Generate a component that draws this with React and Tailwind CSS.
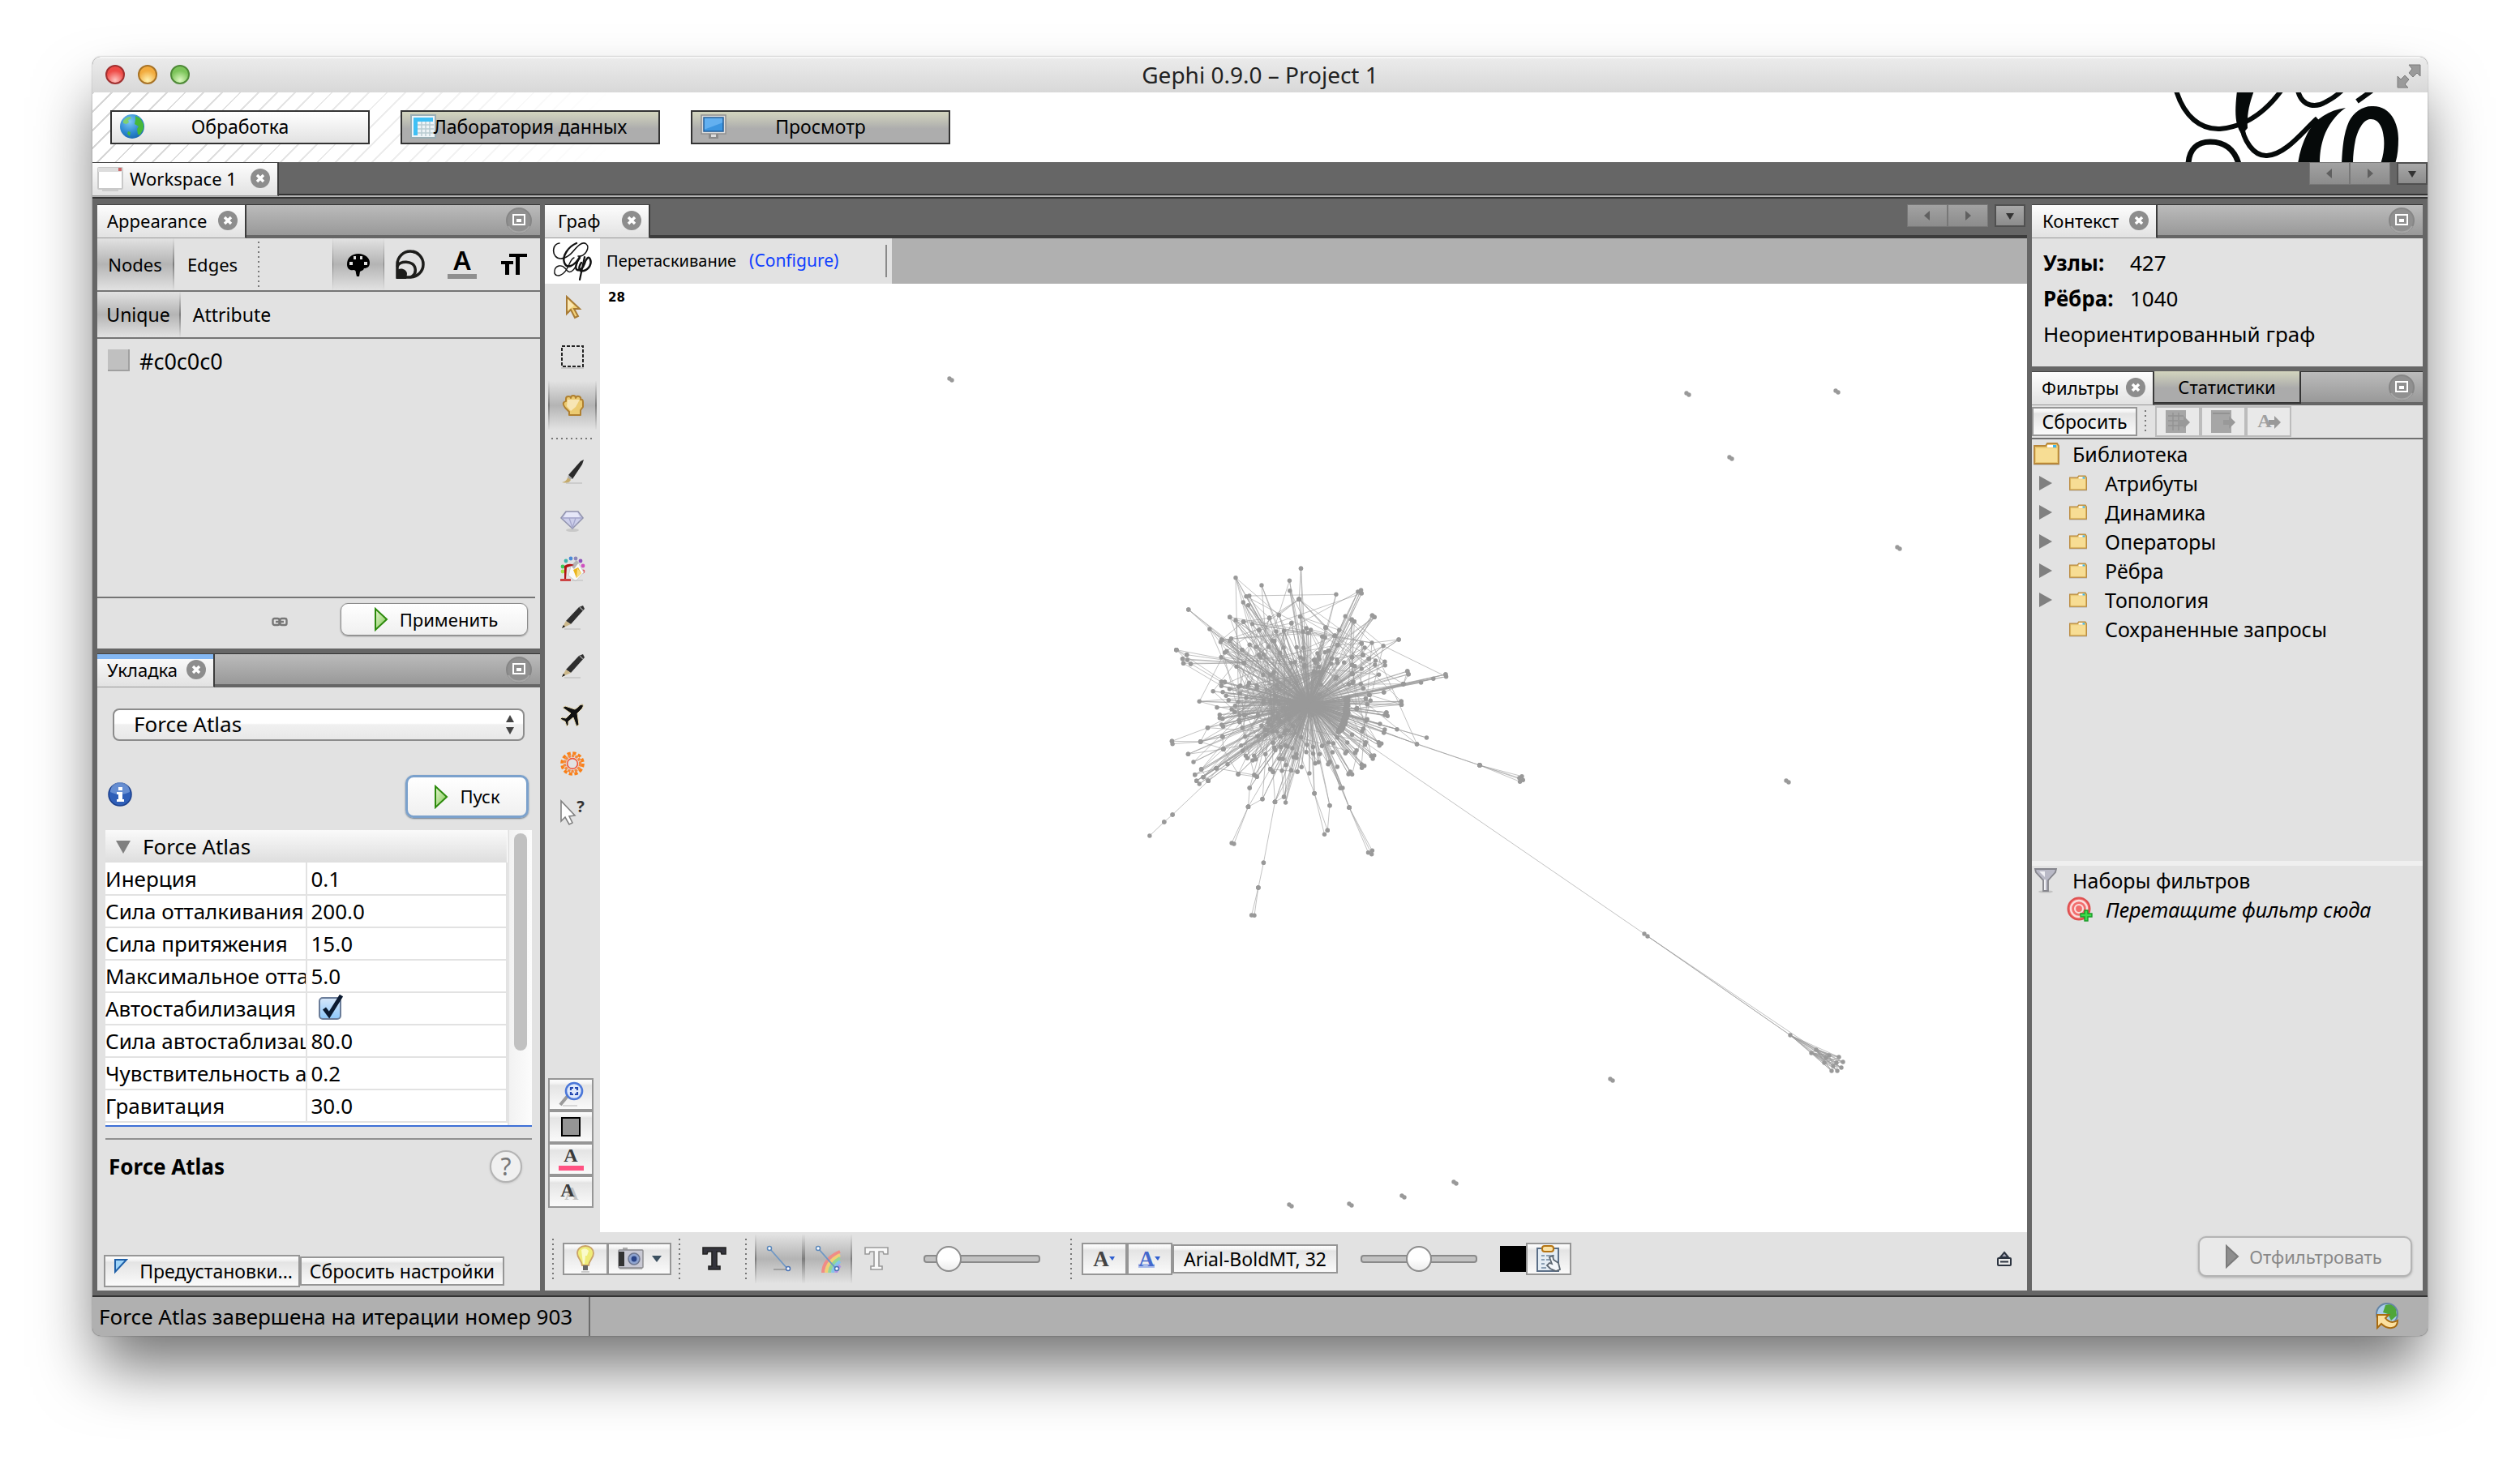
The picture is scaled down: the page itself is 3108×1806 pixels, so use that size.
import React from "react";

/* ---------- graph data ---------- */

const HUB = [680, 625];
const SUB_HUBS = [
  [560, 600],
  [555, 690],
  [635, 735],
  [545, 560],
  [735, 500],
  [615, 545],
];

// Outlying nodes, each wired to a hub
const OUTER = [
  [418, 158], [511, 186], [611, 169], [612, 206], [652, 124], [645, 238], [778, 220], [856, 210], [867, 204],
  [869, 216], [456, 227], [467, 225], [445, 249], [463, 260], [249, 276], [325, 348], [368, 388], [364, 396],
  [397, 304], [418, 315], [446, 321], [478, 329], [539, 307], [573, 296], [649, 302], [618, 326], [563, 357],
  [591, 355], [502, 352], [671, 345], [687, 351], [659, 357], [677, 363], [740, 343], [811, 301], [834, 313],
  [843, 320], [907, 298], [915, 304], [1002, 387], [947, 410], [906, 399], [869, 401], [880, 417], [773, 373],
  [728, 376], [738, 379], [789, 352], [783, 407], [402, 383], [397, 392], [468, 406], [491, 414], [441, 425],
  [386, 430], [379, 435], [366, 452], [421, 487], [448, 473], [551, 391], [557, 392], [590, 417], [501, 443],
  [536, 414], [711, 438], [750, 428], [762, 457], [835, 452], [874, 444], [895, 458], [919, 465], [952, 469],
  [953, 482], [917, 480], [869, 495], [835, 481], [845, 485], [931, 517], [1033, 504], [1037, 515], [1019, 551],
  [1082, 546], [1126, 532], [1170, 516], [1172, 524], [949, 582], [866, 551], [875, 568], [835, 514], [823, 553],
  [1011, 616], [1012, 628], [901, 613], [884, 605], [889, 626], [897, 592], [852, 642], [958, 657], [962, 670],
  [952, 666], [889, 682], [886, 687], [935, 699], [996, 719], [1102, 750], [949, 731], [952, 720], [875, 717],
  [871, 726], [1067, 774], [930, 767], [940, 772], [933, 779], [835, 739], [884, 767], [881, 776], [818, 768],
  [851, 797], [846, 806], [816, 801], [811, 808], [914, 816], [904, 818], [909, 828], [765, 804], [869, 849],
  [879, 854], [870, 862], [782, 858], [828, 876], [822, 885], [835, 886], [755, 840], [749, 848], [715, 841],
  [703, 845], [719, 811], [682, 882], [654, 859], [639, 876], [617, 871], [584, 872], [552, 877], [598, 851],
  [574, 828], [587, 829], [625, 822], [636, 825], [542, 866], [525, 811], [484, 817], [490, 830], [479, 834],
  [454, 817], [460, 826], [443, 799], [438, 779], [494, 895], [485, 888], [427, 885], [389, 848], [349, 863],
  [468, 936], [514, 977], [591, 969], [597, 990], [559, 988], [700, 956], [755, 1001], [801, 936], [793, 937],
  [825, 1009], [295, 867], [272, 887], [278, 910], [288, 921], [320, 910], [302, 896], [267, 840], [248, 811],
  [292, 765], [374, 792], [371, 746], [318, 713], [368, 702], [373, 709], [430, 685], [432, 692], [442, 713],
  [361, 665], [361, 677], [371, 680], [404, 645], [414, 655], [351, 638], [416, 632], [288, 616], [393, 611],
  [384, 595], [337, 578], [372, 581], [396, 570], [367, 544], [379, 544], [367, 558], [435, 557], [427, 617],
  [462, 557], [494, 557], [452, 746], [456, 603], [466, 547], [497, 745], [524, 740], [551, 769], [580, 785],
  [604, 783], [621, 789], [671, 803], [674, 776], [751, 768], [768, 771], [727, 781], [782, 749],
];

// Chains and fans that leave the main body: [from, to]
const LINKS = [
  [[320, 910], [192, 1035]], [[192, 1035], [162, 1062]], [[162, 1062], [110, 1113]],
  [[559, 988], [518, 1213]], [[518, 1213], [499, 1305]], [[499, 1305], [475, 1407]], [[499, 1305], [485, 1408]],
  [[463, 1006], [404, 1140]], [[463, 1006], [412, 1143]], [[514, 977], [463, 1006]], [[468, 936], [463, 1006]],
  [[542, 866], [463, 1006]],
  [[700, 956], [736, 1108]], [[700, 956], [747, 1093]], [[755, 1001], [747, 1093]],
  [[825, 1009], [893, 1175]], [[825, 1009], [907, 1168]], [[825, 1009], [905, 1181]], [[755, 840], [825, 1009]],
  [[1067, 774], [1292, 852]], [[949, 731], [1292, 852]], [[1292, 852], [1434, 899]], [[1292, 852], [1443, 893]],
  [[1292, 852], [1447, 907]], [[1292, 852], [1436, 913]],
  [[645, 238], [539, 307]], [[645, 238], [740, 343]], [[645, 238], [573, 296]], [[645, 238], [773, 373]],
  [[652, 124], [645, 238]], [[539, 307], [446, 321]], [[446, 321], [368, 388]], [[502, 352], [618, 326]],
  [[249, 276], [368, 388]], [[441, 425], [397, 304]], [[448, 473], [502, 352]],
  [[206, 425], [243, 443]], [[206, 425], [448, 473]], [[243, 443], [448, 473]], [[228, 458], [448, 473]],
  [[231, 475], [448, 473]], [[257, 477], [448, 473]], [[206, 425], [379, 544]], [[228, 458], [367, 544]],
  [[231, 475], [367, 558]], [[245, 462], [448, 473]], [[206, 425], [257, 477]],
  [[190, 763], [318, 713]], [[190, 763], [292, 765]], [[192, 773], [292, 765]], [[292, 765], [374, 792]],
  [[292, 765], [318, 713]], [[292, 765], [371, 746]], [[374, 792], [248, 811]], [[374, 792], [371, 746]],
  [[374, 792], [427, 885]], [[427, 885], [494, 895]], [[349, 863], [485, 888]], [[302, 896], [320, 910]],
  [[272, 887], [349, 863]], [[278, 910], [349, 863]], [[295, 867], [320, 910]], [[295, 867], [374, 792]],
  [[542, 866], [639, 876]], [[559, 988], [591, 969]], [[559, 988], [552, 877]], [[559, 988], [617, 871]],
  [[869, 401], [783, 407]], [[835, 452], [907, 298]], [[834, 313], [835, 514]], [[843, 320], [835, 514]],
  [[750, 428], [835, 452]], [[762, 457], [874, 444]], [[783, 407], [915, 304]], [[852, 642], [835, 481]],
  [[852, 642], [884, 605]], [[852, 642], [1011, 616]], [[852, 642], [1012, 628]], [[852, 642], [958, 657]],
  [[897, 592], [1012, 628]], [[1019, 551], [1033, 504]], [[1019, 551], [1037, 515]], [[1019, 551], [1170, 516]],
  [[1019, 551], [949, 582]], [[823, 553], [1019, 551]], [[874, 444], [1002, 387]], [[874, 444], [869, 401]],
  [[740, 343], [773, 373]], [[895, 458], [874, 444]],
];

const FAR_NODES = [
  [1288, 802], [1292, 805], [1468, 927], [1500, 945], [1494, 949], [1516, 952], [1528, 954], [1533, 960],
  [1525, 961], [1510, 961], [1521, 965], [1531, 967], [1519, 971], [1526, 971], [1512, 955],
];
const LONE_NODES = [
  [432, 118], [1341, 136], [1525, 133], [1394, 215], [1601, 326], [1464, 614], [1247, 982],
  [851, 1137], [925, 1136], [990, 1126], [1054, 1109],
];

function makeGraph() {
  let seed = 20151;
  const rnd = () => {
    seed = (seed * 16807) % 2147483647;
    return seed / 2147483647;
  };
  const at = ([x, y]) => [640 + x * 0.3444, 310 + y / 3];
  const nodes = OUTER.map((p) => p);
  const edges = [];
  OUTER.forEach((p) => {
    edges.push([p, HUB], [p, [HUB[0] + rnd() * 40 - 20, HUB[1] + rnd() * 30 - 15]]);
    if (p[0] < 620 && rnd() < 0.6) edges.push([p, SUB_HUBS[Math.floor(rnd() * SUB_HUBS.length)]]);
    if (rnd() < 0.3) edges.push([p, OUTER[Math.floor(rnd() * 60)]]);
  });
  for (let i = 0; i < 110; i++) {
    const a = rnd() * Math.PI * 2;
    const r = 60 + 150 * rnd();
    const p = [650 + Math.cos(a) * r * 1.1, 615 + Math.sin(a) * r];
    if (p[0] > 720 && p[1] > 560) continue;
    nodes.push(p);
    edges.push([p, HUB]);
    if (rnd() < 0.6) edges.push([p, SUB_HUBS[Math.floor(rnd() * 6)]]);
    if (rnd() < 0.3) edges.push([p, nodes[Math.floor(rnd() * nodes.length)]]);
  }
  for (let i = 0; i < 80; i++) {
    const t = rnd();
    const p = [824 - Math.pow(t, 3) * 30 - rnd() * 14, 602 + t * 128];
    nodes.push(p);
    edges.push([p, HUB]);
  }
  for (let i = 0; i < 130; i++) {
    const a = rnd() * Math.PI * 2;
    const r = 70 * rnd();
    edges.push([[640 + Math.cos(a) * r * 1.7, 630 + Math.sin(a) * r], [HUB[0] - 10, HUB[1] + rnd() * 30 - 15]]);
  }
  SUB_HUBS.forEach((h, i) => {
    for (let k = 0; k < 10; k++) edges.push([[h[0] + rnd() * 20 - 10, h[1] + rnd() * 20 - 10], HUB]);
    edges.push([h, SUB_HUBS[(i + 1) % SUB_HUBS.length]]);
  });
  LINKS.forEach(([a, b]) => {
    nodes.push(a, b);
    edges.push([a, b]);
  });
  const n = nodes.map(at).concat(FAR_NODES);
  LONE_NODES.forEach(([x, y]) => n.push([x - 1, y - 1], [x + 2, y + 1]));
  const e = edges.map(([a, b]) => [at(a), at(b)]);
  e.push([at(HUB), FAR_NODES[0]], [FAR_NODES[0], FAR_NODES[2]], [FAR_NODES[1], FAR_NODES[3]], [FAR_NODES[1], FAR_NODES[2]]);
  for (let i = 3; i < FAR_NODES.length; i++) {
    e.push([FAR_NODES[2], FAR_NODES[i]]);
    e.push([FAR_NODES[3], FAR_NODES[i]]);
    e.push([FAR_NODES[4], FAR_NODES[i]]);
    e.push([FAR_NODES[i], FAR_NODES[3 + ((i * 5) % 12)]]);
  }
  return { n, e };
}
const GRAPH = makeGraph();
const f1 = (v) => v.toFixed(1);
const EDGE_PATHS = GRAPH.e.map(([a, b]) => `M${f1(a[0])} ${f1(a[1])}L${f1(b[0])} ${f1(b[1])}`);

function GraphDrawing() {
  return (
    <svg className="block h-full w-full" viewBox="0 0 1760 1170" preserveAspectRatio="xMidYMid meet" aria-label="Граф">
      <g stroke="#999" strokeOpacity="0.6" strokeWidth="1" fill="none">
        {EDGE_PATHS.map((d, i) => (
          <path key={i} d={d} />
        ))}
      </g>
      <g fill="#999">
        {GRAPH.n.map(([x, y], i) => (
          <circle key={i} cx={f1(x)} cy={f1(y)} r="2.7" />
        ))}
      </g>
    </svg>
  );
}

/* ---------- icons ---------- */

const Svg = ({ s = 32, w, h, vb, children, className = "" }) => (
  <svg width={w || s} height={h || s} viewBox={vb || `0 0 ${w || s} ${h || s}`} className={`block shrink-0 ${className}`} aria-hidden="true">
    {children}
  </svg>
);

const CloseIcon = () => (
  <Svg s={24}>
    <circle cx="12" cy="12" r="12" fill="#8d8d8d" />
    <path d="M8 8l8 8M16 8l-8 8" stroke="#fff" strokeWidth="3.4" />
  </Svg>
);
const RestoreIcon = () => (
  <Svg s={34}>
    <circle cx="17" cy="17" r="15" fill="#909090" stroke="#868686" strokeWidth="2" />
    <path d="M4 24a15 15 0 0 0 26 0" stroke="#a6a6a6" strokeWidth="2" fill="none" />
    <rect x="10" y="10" width="14" height="12" fill="none" stroke="#fff" strokeWidth="2" />
    <rect x="14" y="15" width="6" height="4" fill="#fff" />
  </Svg>
);
const Globe = () => (
  <Svg s={32}>
    <defs>
      <radialGradient id="globe" cx=".4" cy=".3" r=".8">
        <stop offset="0" stopColor="#7cc8f5" />
        <stop offset=".6" stopColor="#2b86cf" />
        <stop offset="1" stopColor="#1461a8" />
      </radialGradient>
    </defs>
    <circle cx="16" cy="16" r="15" fill="url(#globe)" />
    <path d="M5 9Q9 4 14 4l1 2-4 2 1 3-3 2-4-1z" fill="#7fd070" />
    <path d="M20 3l6 3 4 7v6l-4 7-3 0-1-7 2-3-5-3 1-5z" fill="#46b83a" />
    <path d="M11 22l3 1-1 5-3-3z" fill="#46b83a" />
  </Svg>
);
const TableIcon = () => (
  <Svg s={32}>
    <rect x="1" y="2" width="30" height="28" fill="#eef4f7" stroke="#9aaeb5" strokeWidth="2" />
    <rect x="4" y="5" width="24" height="5" fill="#3fc0f5" />
    <rect x="4" y="5" width="5" height="22" fill="#3fc0f5" />
    <path d="M14 10v18M19 10v18M24 10v18M9 14h20M9 19h20M9 24h20" stroke="#b9cbd2" strokeWidth="1.5" />
  </Svg>
);
const MonitorIcon = () => (
  <Svg s={32}>
    <path d="M10 25h12v6H10z" fill="#8a8a8a" />
    <path d="M13 24h6v5h-6z" fill="#ddd" />
    <rect x="1" y="2" width="30" height="23" fill="#ddd" stroke="#909090" strokeWidth="1.5" />
    <rect x="4" y="5" width="24" height="17" fill="#3c95e0" />
    <path d="M4 5h24v6L4 20z" fill="#63b0f0" />
    <rect x="4" y="5" width="24" height="17" fill="none" stroke="#245f99" strokeWidth="1.5" />
  </Svg>
);
const WindowIcon = () => (
  <Svg s={32}>
    <rect x="1" y="3" width="30" height="26" rx="1" fill="#fff" stroke="#c9c9c9" strokeWidth="2" />
    <rect x="1" y="3" width="30" height="5" fill="#ddd" />
    <rect x="26" y="3" width="4" height="4" fill="#c66" />
    <path d="M6 31h20" stroke="#ccc" strokeWidth="2" />
  </Svg>
);
const Palette = () => (
  <Svg s={32}>
    <path d="M16 3C8 3 2 8 2 16c0 6 4 8 8 7 2 0 3 1 3 4l1 4h3l1-6 4-2 1-2c4 0 7-2 7-7C30 8 24 3 16 3z" fill="#000" />
    <g fill="#e0e0e0">
      <rect x="10" y="6" width="3" height="4" />
      <rect x="18" y="6" width="3" height="4" />
      <rect x="5" y="13" width="4" height="4" />
      <rect x="23" y="13" width="4" height="4" />
    </g>
  </Svg>
);
const Spiral = () => (
  <Svg s={38}>
    <g fill="none" stroke="#1d1d1b" strokeWidth="3.5">
      <path d="M3 19v16h16a16 16 0 1 0-16-16z" />
      <path d="M3 22c2-8 20-8 22 2 1 5-1 9-6 11" />
    </g>
    <path d="M2 28c2-6 13-4 13 3l-1 6H2z" fill="#1d1d1b" />
  </Svg>
);
const ColorA = () => (
  <Svg w={38} h={40}>
    <text x="19" y="27" textAnchor="middle" className="font-['Noto_Sans'] text-[32px] font-semibold">A</text>
    <rect x="1" y="32" width="36" height="6" fill="#8f8f8f" />
  </Svg>
);
const SizeT = () => (
  <Svg w={34} h={30}>
    <path d="M11 2h22v4h-9v22h-5V6h-8zM1 11h15v4h-5v13H6V15H1z" fill="#000" />
  </Svg>
);
const Play = ({ gray }) => (
  <Svg w={18} h={30}>
    <defs>
      <linearGradient id="play" x1="0" y1="0" x2="1" y2="1">
        <stop offset="0" stopColor="#e6f5d0" />
        <stop offset="1" stopColor="#7cc850" />
      </linearGradient>
    </defs>
    <path d="M2 2v26l14-13z" fill={gray ? "#8e8e8e" : "url(#play)"} stroke={gray ? "#7c7c7c" : "#2c8a0c"} strokeWidth="2" />
  </Svg>
);
const InfoIcon = () => (
  <Svg s={30}>
    <circle cx="15" cy="15" r="14" fill="#2f5fb8" stroke="#1b3f8c" strokeWidth="1.5" />
    <path d="M3 12a12 12 0 0 1 24 0c-8 4-16 4-24 0z" fill="#7ea2dd" opacity=".7" />
    <path d="M13 6h5v4h-5zM11 12h7v9h2v3h-9v-3h2v-6h-2z" fill="#fff" />
  </Svg>
);
const Chain = () => (
  <Svg w={20} h={12}>
    <g fill="none" stroke="#777" strokeWidth="2.4">
      <rect x="1.5" y="2" width="8" height="8" rx="2" />
      <rect x="10.5" y="2" width="8" height="8" rx="2" />
      <path d="M5 6h10" />
    </g>
  </Svg>
);
const GephiMark = () => (
  <Svg w={50} h={50}>
    <g fill="none" stroke="#111" strokeLinecap="round">
      <path d="M9 3C1 4 0 14 4 19c5 6 15 2 21-5S37 0 42 4s-1 16-10 15" strokeWidth="1.6" />
      <path d="M30 3C20 7 12 19 15 27s12 5 19-7" strokeWidth="2.4" />
      <path d="M27 21c-5 1-6 12-12 18S2 44 3 37s9-8 13-3 6 6 10 2 5-10 7-14" strokeWidth="1.4" />
      <path d="M34 21c-5 6-6 14-3 15s7-2 9-8 5-10 7-5-1 12-8 14-7-4-3-10" strokeWidth="2.4" />
      <path d="M40 20L34 48" strokeWidth="2.2" />
    </g>
  </Svg>
);
const BannerLogo = () => (
  <Svg w={280} h={86}>
    <g fill="none" stroke="#060a0a">
      <path d="M4-2C14 30 34 46 58 45c36-3 60-26 76-48" strokeWidth="6" />
      <path d="M84 36C86 60 100 79 116 78c24-2 44-30 62-46" strokeWidth="6" />
      <path d="M154-2c6 22 24 20 34 14 8-4 14-8 20-14" strokeWidth="6" />
      <path d="M227 11L245-2" strokeWidth="6" />
      <path d="M19 88C20 70 30 61 46 61c18 0 30 10 35 27" strokeWidth="7" />
    </g>
    <path d="M79-2h21C94 14 91 28 92 44l-7 8C76 40 76 24 79-2z" fill="#060a0a" />
    <path d="M213 19c-12 8-22 22-27 36-4 12-5 22-5 33h-27c2-14 6-26 12-38 10-18 26-28 47-31z" fill="#060a0a" />
    <path d="M208 88c1-18 2-36 9-52 6-12 18-20 30-19 22 0 31 22 31 40 0 12-1 22-4 31h-18c4-11 5-22 4-32-1-12-6-24-17-23-9 1-15 14-18 26-2 10-3 20-3 29z" fill="#060a0a" />
  </Svg>
);

const ArrowTool = () => (
  <Svg s={32}>
    <path d="M9 2v21l5-5 5 10 4-2-5-9h7z" fill="#f3d27a" stroke="#a87b35" strokeWidth="2" />
    <path d="M10 5v14l8-6z" fill="#fcf0cc" opacity=".7" />
  </Svg>
);
const RectTool = () => (
  <Svg s={32}>
    <path d="M2 30h28" stroke="#c8c8c8" strokeWidth="2" />
    <rect x="3" y="3" width="26" height="25" fill="none" stroke="#222" strokeWidth="2" strokeDasharray="4 2" />
  </Svg>
);
const HandTool = () => (
  <Svg s={32}>
    <path
      d="M8 11V8q0-3 3-3t3 2q0-3 3-3t3 3q1-3 4-2t2 4q3-1 3 3v6l-3 4v6H12v-4l-5-5q-3-4-2-6t3-2z"
      fill="#eccb72"
      stroke="#b08030"
      strokeWidth="2"
      strokeLinejoin="round"
    />
    <path d="M10 9h15l-5 9-6 5-5-6z" fill="#fdf3d8" opacity=".65" />
  </Svg>
);
const BrushTool = () => (
  <Svg s={32}>
    <path d="M8 30h20" stroke="#c4c4c4" strokeWidth="1.5" />
    <path d="M11 20L26 3l4-2-2 6-12 18z" fill="#2b2b2b" />
    <path d="M11 20l5 4-3 2-3-3z" fill="#aaa" />
    <path d="M3 29q6-1 7-6l4 3q-2 5-11 3z" fill="#c5ab6c" />
  </Svg>
);
const GemTool = () => (
  <Svg s={32}>
    <ellipse cx="16" cy="28" rx="8" ry="2" fill="#c8c8c8" />
    <path d="M8 5h15l6 8-13 13L2 13z" fill="#ccceea" stroke="#9294ae" strokeWidth="1.6" />
    <path d="M9 6h13l3 6H5z" fill="#e6e7f8" />
    <path d="M3 13h25M12 13l4 12 4-12" stroke="#a5a7cc" strokeWidth="1.3" fill="none" />
  </Svg>
);
const PaintTool = () => (
  <Svg s={32}>
    <circle cx="4" cy="19" r="2.4" fill="#a4e04c" />
    <circle cx="4" cy="13" r="2.4" fill="#3ecb58" />
    <circle cx="8" cy="6" r="2.4" fill="#40b5a8" />
    <circle cx="14" cy="3" r="2.4" fill="#4b8ad8" />
    <circle cx="20" cy="3" r="2.4" fill="#8c86b8" />
    <circle cx="26" cy="6" r="2.4" fill="#8d50bc" />
    <circle cx="29" cy="12" r="2.4" fill="#d04fc0" />
    <circle cx="29" cy="19" r="2.4" fill="#e8535d" />
    <path d="M14 12l-3 12 9 7 10-11-7-12z" fill="#fafafa" stroke="#ccc" />
    <path d="M14 12l7-7 3 3-6 8z" fill="#b4b4b4" />
    <path d="M17 17l6-3 4 7-6 6z" fill="#eab41c" />
    <path d="M27 21l-6 6 1-12z" fill="#f7dc80" />
    <path d="M6 12q6-4 12-1l-9 3-1 15H6z" fill="#b31313" />
    <path d="M1 28h13v3H1z" fill="#c44" />
    <path d="M15 30h14" stroke="#bbb" />
  </Svg>
);
const PencilTool = () => (
  <Svg s={32}>
    <path d="M6 30h20" stroke="#c4c4c4" strokeWidth="1.5" />
    <path d="M8 20L24 3l5-2 2 4-17 19z" fill="#2e2e2e" />
    <path d="M25 3l4 4" stroke="#999" strokeWidth="1.5" />
    <path d="M3 29l5-9 6 4z" fill="#cbb78a" />
    <path d="M3 29l2-4 2 2z" fill="#111" />
  </Svg>
);
const PlaneTool = () => (
  <Svg s={32}>
    <path d="M29 3q-3-1-7 4l-3 2L7 5 4 7l10 7-6 6-5-1-2 2 6 3 2 6 2-2v-4l6-5 4 11 3-2-2-14 6-6q2-3 1-5z" fill="#111" stroke="#e6d8b0" />
  </Svg>
);
const GearTool = () => (
  <Svg s={32}>
    <circle cx="16" cy="16" r="13" fill="none" stroke="#f98018" strokeWidth="3.6" strokeDasharray="4.2 2.6" />
    <circle cx="16" cy="16" r="9.6" fill="none" stroke="#f58a3c" strokeWidth="3.4" strokeDasharray="3.4 1" />
    <circle cx="16" cy="16" r="6.4" fill="none" stroke="#f0563a" strokeWidth="1.6" />
  </Svg>
);
const HelpTool = () => (
  <Svg s={34}>
    <path d="M3 3v25l5-5 5 9 4-2-4-8 7-1z" fill="#fff" stroke="#808080" strokeWidth="1.6" />
    <text x="27" y="17" textAnchor="middle" className="fill-[#333] font-['Noto_Sans'] text-[20px] font-bold">?</text>
  </Svg>
);
const Magnifier = () => (
  <Svg s={32}>
    <path d="M6 30h18" stroke="#ccc" strokeWidth="1.5" />
    <path d="M3 29L12 18" stroke="#9a9a9a" strokeWidth="4" />
    <circle cx="20" cy="12" r="10" fill="#dfe9fb" stroke="#4b77d8" strokeWidth="2.6" />
    <path d="M16 11V8h3M21 8h3v3M24 13v3h-3M19 16h-3v-3" stroke="#2448b0" strokeWidth="2.2" fill="none" />
  </Svg>
);
const UnderlinedLetter = () => (
  <Svg s={32}>
    <text x="16" y="19" textAnchor="middle" className="fill-[#3a3a3a] font-['Liberation_Serif'] text-[24px] font-bold">A</text>
    <rect x="1" y="24" width="31" height="6" fill="#ff5282" />
  </Svg>
);
const ShadowLetter = () => (
  <Svg s={32}>
    <text x="17" y="26" textAnchor="middle" className="fill-[#c2c2c2] font-['Liberation_Serif'] text-[24px] font-bold">A</text>
    <text x="12" y="22" textAnchor="middle" className="fill-[#3a3a3a] font-['Liberation_Serif'] text-[24px] font-bold">A</text>
  </Svg>
);
const ModeLetter = ({ blue }) => (
  <Svg s={32}>
    {blue && <rect x="2" y="22" width="20" height="5" fill="#a9bbea" />}
    <text
      x="12"
      y="25"
      textAnchor="middle"
      fill={blue ? "#4468cc" : "#444"}
      className="font-['Liberation_Serif'] text-[27px] font-bold"
    >
      A
    </text>
    <path d="M22 13h7l-3 5z" fill="#2f5fd0" />
  </Svg>
);
const BigT = ({ outline }) => (
  <Svg s={32}>
    <path d="M2 2h28v8h-5l-1-3h-5v18h4v4H9v-4h4V7H8L7 10H2z" fill={outline ? "#f8f8f8" : "#34343c"} stroke={outline ? "#999" : "#222"} strokeWidth="1.6" />
  </Svg>
);
const Bulb = () => (
  <Svg s={34}>
    <path d="M12 33h10" stroke="#bbb" strokeWidth="1.5" />
    <path d="M17 1c-6 0-10 4-10 9 0 6 5 8 6 15h8c1-7 6-9 6-15 0-5-4-9-10-9z" fill="#efec78" stroke="#c9a268" strokeWidth="1.8" />
    <path d="M12 6q5-4 9 1l-2 6h-2l-1 10h-2z" fill="#fafacb" />
    <path d="M14 25h6v6h-6z" fill="#666" />
  </Svg>
);
const Camera = () => (
  <Svg s={32}>
    <path d="M2 28h28" stroke="#bbb" strokeWidth="2" />
    <path d="M6 2h6v4H6z" fill="#aaa" />
    <rect x="1" y="5" width="30" height="22" rx="1" fill="#c9c9d4" stroke="#8a8a8e" strokeWidth="1.4" />
    <rect x="1" y="7" width="7" height="18" fill="#333" />
    <circle cx="20" cy="16" r="7" fill="#8fa4d0" stroke="#6d7690" strokeWidth="1.5" />
    <circle cx="20" cy="16" r="3.4" fill="#2a4488" />
  </Svg>
);
const EdgeIcon = ({ rainbow }) => (
  <Svg s={34}>
    {rainbow ? (
      <g fill="none" strokeWidth="4">
        <path d="M11 34Q12 16 32 8" stroke="#f08c86" />
        <path d="M15 34Q16 20 32 12" stroke="#f2cf74" />
        <path d="M19 34Q20 23 32 16" stroke="#93d795" />
        <path d="M23 34Q24 26 32 20" stroke="#84c4ec" />
        <path d="M27 34Q28 29 32 25" stroke="#b394e2" />
      </g>
    ) : (
      <path d="M10 30h16" stroke="#a0a0a0" strokeWidth="2" />
    )}
    <path d="M5 4l23 26" stroke="#6f97c4" strokeWidth="1.8" />
    <circle cx="5" cy="4" r="2.5" fill="#fff" stroke="#5b88bb" strokeWidth="1.5" />
    <circle cx="28" cy="29" r="2.5" fill="#fff" stroke="#4a73b5" strokeWidth="1.5" />
  </Svg>
);
const Clipboard = () => (
  <Svg s={34}>
    <rect x="3" y="4" width="26" height="28" fill="#e4edf4" stroke="#5b6f88" strokeWidth="2" />
    <rect x="9" y="1" width="14" height="7" rx="3" fill="#fbe3a8" stroke="#b57514" strokeWidth="2" />
    <path d="M8 13h4M14 13h10M8 18h4M14 18h4M8 23h4M8 28h6" stroke="#8ba0b4" strokeWidth="2" />
    <path d="M18 15l4-2 1 5 6 4 2 8-5 2-7-3-4-4 3-3 3 1z" fill="#f4f7fa" stroke="#5b6670" strokeWidth="1.8" />
  </Svg>
);
const Eject = () => (
  <Svg s={20}>
    <path d="M10 2l5 6H5z" fill="#aab" stroke="#2c3440" strokeWidth="2" />
    <rect x="2" y="9" width="16" height="9" rx="1" fill="#e8e8e8" stroke="#2c3440" strokeWidth="2" />
    <path d="M5 13.5h10" stroke="#2c3440" strokeWidth="2" />
  </Svg>
);
const Folder = ({ s = 32 }) => (
  <Svg s={s} vb="0 0 32 32">
    <path d="M0 28h32v2H0z" fill="#bdbdbd" />
    <path d="M1 6h14l2-3h12l2 3v22H1z" fill="#e9c873" stroke="#b8873a" strokeWidth="1.8" />
    <path d="M3 9h26v17H3z" fill="#f7dd94" />
    <path d="M17 5h9v3h-9z" fill="#fff" />
    <path d="M24 5h4v3h-4z" fill="#39b6f2" />
  </Svg>
);
const Funnel = () => (
  <Svg s={32}>
    <ellipse cx="16" cy="30" rx="9" ry="1.6" fill="#c2c2c2" />
    <path d="M3 2h26l-1 4-9 10v13h-6V16L4 6z" fill="#b9b9c6" stroke="#85858c" strokeWidth="1.8" />
    <path d="M8 5h7v7z" fill="#f0f0f4" />
    <path d="M15 15v13" fill="none" stroke="#f2f2f6" strokeWidth="2" />
  </Svg>
);
const Target = () => (
  <Svg s={32}>
    <circle cx="15" cy="15" r="13.5" fill="#f26d6d" stroke="#dd4f4f" strokeWidth="2" />
    <circle cx="15" cy="15" r="10" fill="none" stroke="#fbdcdc" strokeWidth="2.4" />
    <circle cx="15" cy="15" r="5" fill="none" stroke="#fbdcdc" strokeWidth="2.2" />
    <path d="M22 17h4v4h5v4h-5v5h-4v-5h-5v-4h5z" fill="#3ddc4a" stroke="#1a9a28" strokeWidth="1.4" />
  </Svg>
);
const FilterGlyph = ({ kind }) => (
  <Svg s={32}>
    {kind === "a" ? (
      <text x="11" y="23" textAnchor="middle" className="fill-[#a0a0a0] font-['Liberation_Serif'] text-[24px] font-bold">A</text>
    ) : (
      <rect x="1" y="2" width="25" height="28" fill="#a6a6a6" />
    )}
    {kind === "grid" && <path d="M4 9h19M4 15h19M4 21h19M10 5v22M17 5v22" stroke="#939393" strokeWidth="1.4" />}
    {kind === "list" && <path d="M3 6h21" stroke="#939393" strokeWidth="2" />}
    <path d="M16 14h7v-5l8 8-8 8v-5h-7z" fill="#999" />
  </Svg>
);
const UpdateGlobe = () => (
  <Svg s={34}>
    <circle cx="16" cy="14" r="13" fill="#a9cdea" stroke="#6585a5" strokeWidth="2" />
    <path d="M14 3q8-3 13 5l1 8-7 6-4-8-6-2z" fill="#4fa63a" />
    <path d="M4 15h14l-4 4q6 8 15 3 0 8-7 9-7 1-13-5l-5 5z" fill="#fbe0a0" stroke="#a86b10" strokeWidth="2" />
  </Svg>
);
const Fullscreen = () => (
  <Svg s={30}>
    <path d="M15 1h14v14l-4-4-5 5-5-5 4-5zM1 29V15l4 4 5-5 5 5-5 6 4 4z" fill="#9a9a9a" stroke="#7b7b7b" />
  </Svg>
);
const Triangle = ({ dir }) => (
  <Svg s={20}>
    <path
      d={{ left: "M13 4v12L6 10z", right: "M7 4v12l7-6z", down: "M5 7h10l-5 8z" }[dir]}
      fill={dir === "down" ? "#333" : "#606060"}
    />
  </Svg>
);

/* ---------- shared pieces ---------- */

function Tab({ children, icon, focused, className = "" }) {
  return (
    <div
      className={`flex h-[42px] items-center justify-between border-r-2 border-b border-t border-t-[#444] border-r-[#3c3c3c] border-b-[#999] bg-linear-to-b from-[#fdfdfd] to-[#e2e2e2] pr-[9px] pb-[2px] text-[22px] ${
        focused ? "shadow-[inset_0_6px_0_#84b8f4]" : ""
      } ${className}`}
    >
      <button type="button" className="flex items-center gap-2">
        {icon}
        {children}
      </button>
      <button type="button" aria-label="Закрыть">
        <CloseIcon />
      </button>
    </div>
  );
}

function PanelHeader({ children }) {
  return (
    <div className="flex h-[42px] shrink-0 items-start border-b-4 border-[#666] bg-linear-to-b from-[#bcbcbc] to-[#999] shadow-[inset_0_1px_0_#333]">
      {children}
      <button type="button" aria-label="Свернуть" className="mt-[3px] mr-[9px] ml-auto">
        <RestoreIcon />
      </button>
    </div>
  );
}

function TabNav({ className = "" }) {
  return (
    <div className={`ml-auto flex h-7 self-start ${className}`}>
      <button type="button" aria-label="Назад" className="flex w-[50px] items-center justify-center border border-[#777] bg-linear-to-b from-[#a2a2a2] to-[#8c8c8c]">
        <Triangle dir="left" />
      </button>
      <button type="button" aria-label="Вперёд" className="flex w-[50px] items-center justify-center border border-[#777] bg-linear-to-b from-[#a2a2a2] to-[#8c8c8c]">
        <Triangle dir="right" />
      </button>
      <button type="button" aria-label="Список" className="ml-2 flex w-[38px] items-center justify-center border-2 border-[#505050] bg-linear-to-b from-[#a8a8a8] to-[#8c8c8c]">
        <Triangle dir="down" />
      </button>
    </div>
  );
}

const pressed =
  "bg-[linear-gradient(#e2e2e2,#b4b4b4_50%,#e2e2e2)] [border-image:linear-gradient(#e2e2e2,#7c7c7c_50%,#e2e2e2)_1]";
const squareBtn = "border-2 border-[#969696] bg-[linear-gradient(#fdfdfd_0,#f4f4f4_12%,#e4e4e4_20%,#fafafa_100%)]";

const DotsV = ({ className = "" }) => (
  <span className={`w-[2px] shrink-0 bg-[repeating-linear-gradient(#777_0_2px,transparent_2px_6px)] ${className}`} />
);

/* ---------- panels ---------- */

function TitleBar() {
  return (
    <header className="relative flex h-11 shrink-0 items-center justify-center border-t-2 border-[#f6f6f6] bg-linear-to-b from-[#ebebeb] to-[#d8d8d8] pb-[2px] text-[28px] text-[#222]">
      <div className="absolute top-[8px] left-4 flex gap-4">
        <button type="button" aria-label="Закрыть окно" className="size-6 rounded-full border-2 border-[#a03030] bg-[radial-gradient(circle_at_50%_85%,#ffc4c0,#ee4b47_60%)]" />
        <button type="button" aria-label="Свернуть окно" className="size-6 rounded-full border-2 border-[#a87326] bg-[radial-gradient(circle_at_50%_85%,#fff2b0,#f2ab3e_60%)]" />
        <button type="button" aria-label="Развернуть окно" className="size-6 rounded-full border-2 border-[#4f8a38] bg-[radial-gradient(circle_at_50%_85%,#dcf8c0,#7cc45a_60%)]" />
      </div>
      <h1>Gephi 0.9.0 – Project 1</h1>
      <button type="button" aria-label="Во весь экран" className="absolute top-[7px] right-2">
        <Fullscreen />
      </button>
    </header>
  );
}

function Banner() {
  const base = "relative flex h-[42px] w-80 items-center justify-center border-2 border-[#333] pb-[2px] text-[23px]";
  const off = "bg-[linear-gradient(#d3d5be,#adadad_55%)]";
  return (
    <div className="relative flex h-[86px] shrink-0 items-center bg-white pl-[22px]">
      <div className="absolute inset-y-0 left-0 w-[640px] bg-[repeating-linear-gradient(135deg,#d4d4d4_0_2px,transparent_2px_16px)] [mask-image:linear-gradient(to_right,black,transparent)]" />
      <nav className="flex gap-[38px]">
        <button type="button" className={`${base} bg-linear-to-b from-white to-[#e2e2e2]`}>
          <span className="absolute left-[9px]"><Globe /></span>
          Обработка
        </button>
        <button type="button" className={`${base} ${off}`}>
          <span className="absolute left-[10px]"><TableIcon /></span>
          <span className="relative">Лаборатория данных</span>
        </button>
        <button type="button" className={`${base} ${off}`}>
          <span className="absolute left-[10px]"><MonitorIcon /></span>
          Просмотр
        </button>
      </nav>
      <div className="mr-[34px] ml-auto">
        <BannerLogo />
      </div>
    </div>
  );
}

function WorkspaceBar() {
  return (
    <div className="flex h-[45px] shrink-0 items-start border-b-2 border-[#333] bg-[#666] shadow-[inset_0_-2px_0_#b4b4b4,inset_0_-4px_0_#333]">
      <Tab className="w-[230px] pl-[6px]" icon={<WindowIcon />}>
        Workspace 1
      </Tab>
      <TabNav />
    </div>
  );
}

function Appearance() {
  const tool = "flex h-16 w-16 items-center justify-center";
  return (
    <section className="flex h-[548px] shrink-0 flex-col bg-[#e2e2e2]">
      <PanelHeader>
        <Tab className="w-[184px] pl-[12px]">Appearance</Tab>
      </PanelHeader>
      <div className="flex h-[66px] shrink-0 border-b-2 border-[#757575] text-[22px]">
        <button type="button" className={`h-16 w-[95px] border-r-2 ${pressed}`}>Nodes</button>
        <button type="button" className="w-[94px]">Edges</button>
        <DotsV className="my-1 ml-[9px]" />
        <div className="ml-auto flex">
          <button type="button" aria-label="Цвет" className={`${tool} border-x ${pressed}`}><Palette /></button>
          <button type="button" aria-label="Размер" className={tool}><Spiral /></button>
          <button type="button" aria-label="Цвет надписи" className={tool}><ColorA /></button>
          <button type="button" aria-label="Размер надписи" className={tool}><SizeT /></button>
        </div>
      </div>
      <div className="flex h-[58px] shrink-0 border-b-2 border-[#757575] text-[23px]">
        <button type="button" className={`w-[103px] border-r-2 ${pressed}`}>Unique</button>
        <button type="button" className="w-[126px]">Attribute</button>
      </div>
      <div className="flex flex-1 items-start gap-3 pt-[10px] pl-[13px]">
        <button type="button" aria-label="Выбрать цвет" className="mt-[3px] size-[27px] border-r-2 border-b-2 border-[#a0a0a0] bg-[#c0c0c0]" />
        <span className="text-[27px] leading-9">#c0c0c0</span>
      </div>
      <div className="mr-[6px] flex h-16 shrink-0 items-start border-t-2 border-[#757575] pt-[6px] pr-[9px]">
        <button type="button" aria-label="Связать" className="mt-[17px] ml-[215px]"><Chain /></button>
        <button
          type="button"
          className="ml-auto flex h-10 w-[231px] items-center justify-center gap-[14px] rounded-[9px] border border-[#8a8a8a] bg-linear-to-b from-white to-[#f0f0f0] pl-1 text-[22px] shadow-[0_1px_2px_#888]"
        >
          <Play />
          Применить
        </button>
      </div>
    </section>
  );
}

const PROPS = [
  ["Инерция", "0.1"],
  ["Сила отталкивания", "200.0"],
  ["Сила притяжения", "15.0"],
  ["Максимальное отталкивание", "5.0"],
  ["Автостабилизация", true],
  ["Сила автостаблизации", "80.0"],
  ["Чувствительность автостабилизации", "0.2"],
  ["Гравитация", "30.0"],
];

function Layout() {
  return (
    <section className="flex min-h-0 flex-1 flex-col bg-[#e2e2e2]">
      <PanelHeader>
        <Tab focused className="w-[145px] pl-[12px]">Укладка</Tab>
      </PanelHeader>
      <div className="relative mx-[19px] mt-[26px] h-10">
        <select aria-label="Укладка" className="h-10 w-full appearance-none rounded-[8px] border-2 border-[#8c8c8c] bg-[linear-gradient(#fff_45%,#f0f0f0_50%,#e8e8e8)] pb-[2px] pl-6 text-[26px] leading-8">
          <option>Force Atlas</option>
        </select>
        <Svg w={12} h={28} className="pointer-events-none absolute top-[6px] right-[12px]">
          <path d="M6 2l5 9H1zM6 26l5-9H1z" fill="#444" />
        </Svg>
      </div>
      <div className="mt-[42px] flex h-[53px] shrink-0 items-start pr-[14px] pl-[13px]">
        <button type="button" aria-label="Сведения" className="mt-[9px]"><InfoIcon /></button>
        <button
          type="button"
          className="ml-auto flex h-[53px] w-[152px] items-center justify-center gap-[14px] rounded-[10px] border-[3px] border-[#7ba1cc] bg-linear-to-b from-white to-[#f0f0f0] text-[22px] shadow-[0_1px_2px_#678]"
        >
          <Play />
          Пуск
        </button>
      </div>
      <div className="mx-[10px] mt-[15px] flex min-h-0 flex-1 overflow-hidden border-b-2 border-[#3d6fd6] bg-white">
        <table className="w-0 flex-1 table-fixed border-collapse self-start text-[26px] leading-[38px]">
          <thead>
            <tr>
              <th colSpan={2} className="h-10 bg-linear-to-b from-[#fafafa] to-[#dedede] p-0 text-left font-normal">
                <button type="button" className="flex items-center gap-[14px] pl-3">
                  <Svg s={20}><path d="M1 3h18l-9 16z" fill="#808080" /></Svg>
                  Force Atlas
                </button>
              </th>
            </tr>
          </thead>
          <tbody>
            {PROPS.map(([name, value]) => (
              <tr key={name}>
                <th scope="row" className="h-10 overflow-hidden border-r-2 border-b-2 border-[#e2e2e2] p-0 text-left font-normal whitespace-nowrap">
                  {name}
                </th>
                <td className="h-10 border-r-2 border-b-2 border-[#e2e2e2] p-0 pl-[5px]">
                  {value === true ? (
                    <label className="relative ml-[9px] block size-7">
                      <input type="checkbox" defaultChecked aria-label={name} className="block size-7 appearance-none rounded-[5px] border-2 border-[#6b7d99] bg-linear-to-b from-[#d4e6fa] to-[#8fc8fa]" />
                      <Svg w={34} h={34} className="pointer-events-none absolute -top-[5px] left-0">
                        <path d="M7 19l6 8L28 3" fill="none" stroke="#0b1a30" strokeWidth="5" />
                      </Svg>
                    </label>
                  ) : (
                    value
                  )}
                </td>
              </tr>
            ))}
          </tbody>
        </table>
        <div className="w-[30px] shrink-0 border-l-2 border-[#e4e4e4] bg-linear-to-r from-[#f2f2f2] to-[#fcfcfc] px-[6px] pt-1">
          <div className="h-[268px] w-4 rounded-full bg-[#c1c1c1]" />
        </div>
      </div>
      <div className="mx-[10px] mt-[14px] flex h-[144px] shrink-0 items-start justify-between border-t-2 border-[#909090] pt-[13px] pr-[12px] pl-1">
        <h2 className="text-[26px] leading-10 font-bold">Force Atlas</h2>
        <button type="button" aria-label="Справка" className="flex size-10 items-center justify-center rounded-full border-2 border-[#b4b4b4] bg-[#f0f0f0] text-[30px] leading-none text-[#777] shadow-sm">
          ?
        </button>
      </div>
      <div className="flex shrink-0 items-center pb-1 pl-2 text-[23px]">
        <button type="button" className={`flex h-10 w-[242px] items-center justify-end pr-[7px] ${squareBtn}`}>
          <Svg w={18} h={20} className="mr-auto mb-3 ml-[10px]">
            <path d="M2 2h14L2 17z" fill="#9fd4f8" stroke="#1d5fa8" strokeWidth="2" />
          </Svg>
          Предустановки...
        </button>
        <button type="button" className={`flex h-9 w-[252px] items-center justify-center ${squareBtn}`}>Сбросить настройки</button>
      </div>
    </section>
  );
}

const TOOLS = [
  ["Выделение", ArrowTool],
  ["Прямоугольник", RectTool],
  ["Перетаскивание", HandTool, true],
  null,
  ["Кисть", BrushTool],
  ["Размер", GemTool],
  ["Заливка", PaintTool],
  ["Узел", PencilTool],
  ["Ребро", PencilTool],
  ["Кратчайший путь", PlaneTool],
  ["Тепловая карта", GearTool],
  ["Правка", HelpTool],
];

function GraphPanel() {
  const range =
    "h-8 w-36 appearance-none bg-transparent [&::-webkit-slider-runnable-track]:h-[10px] [&::-webkit-slider-runnable-track]:rounded-[4px] [&::-webkit-slider-runnable-track]:border-2 [&::-webkit-slider-runnable-track]:border-[#8a8a8a] [&::-webkit-slider-runnable-track]:bg-[#c2c2c2] [&::-webkit-slider-thumb]:mt-[-13px] [&::-webkit-slider-thumb]:size-8 [&::-webkit-slider-thumb]:appearance-none [&::-webkit-slider-thumb]:rounded-full [&::-webkit-slider-thumb]:border-2 [&::-webkit-slider-thumb]:border-[#8c8c8c] [&::-webkit-slider-thumb]:bg-[linear-gradient(#fff_50%,#ececec)]";
  const sq = `flex h-10 w-14 items-center justify-center ${squareBtn}`;
  const press = `flex h-[60px] w-[60px] items-center justify-center border-x-2 ${pressed}`;
  return (
    <section className="flex min-w-0 flex-col">
      <div className="flex h-[42px] shrink-0 items-start bg-[#666] shadow-[inset_0_-4px_0_#3c3c3c]">
        <Tab className="w-[130px] pl-4">Граф</Tab>
        <TabNav className="mr-[2px]" />
      </div>
      <div className="flex h-14 shrink-0 bg-[#b0b0b0]">
        <div className="flex w-[68px] items-center justify-center bg-white"><GephiMark /></div>
        <div className="flex w-[360px] items-center bg-[#e2e2e2] pl-2 text-[20px]">
          <span>Перетаскивание</span>
          <button type="button" className="ml-4 text-[21px] text-[#1040ff]">(Configure)</button>
          <span className="mr-1.5 ml-auto h-10 w-[2px] bg-[#8a8a8a]" />
        </div>
      </div>
      <div className="flex min-h-0 flex-1">
        <div className="flex w-[68px] shrink-0 flex-col items-center bg-[#e2e2e2]">
          {TOOLS.map((t, i) => {
            if (!t) return <span key={i} className="my-[10px] h-[2px] w-[52px] bg-[repeating-linear-gradient(to_right,#777_0_2px,transparent_2px_6px)]" />;
            const [name, Icon, on] = t;
            return (
              <button key={name} type="button" aria-label={name} className={`flex h-[60px] w-[60px] items-center justify-center ${on ? `border-x-2 ${pressed}` : ""}`}>
                <Icon />
              </button>
            );
          })}
          <div className="mt-auto mr-auto mb-[30px] ml-1 flex flex-col">
            <button type="button" aria-label="По размеру" className={sq}><Magnifier /></button>
            <button type="button" aria-label="Фон" className={sq}><span className="size-6 border-2 border-black bg-[#959595]" /></button>
            <button type="button" aria-label="Сбросить цвета" className={sq}><UnderlinedLetter /></button>
            <button type="button" aria-label="Сбросить надписи" className={sq}><ShadowLetter /></button>
          </div>
        </div>
        <div className="relative min-w-0 flex-1 bg-white">
          <span className="absolute top-[7px] left-[10px] font-['DejaVu_Sans'] text-[15px] leading-5 font-bold">28</span>
          <GraphDrawing />
        </div>
      </div>
      <div className="flex h-[72px] shrink-0 items-center bg-[#e2e2e2] pb-[6px] pl-[9px]">
        <DotsV className="h-[50px]" />
        <button type="button" aria-label="Подсветка" className={`ml-[11px] ${sq}`}><Bulb /></button>
        <button type="button" aria-label="Снимок" className={`-ml-px flex h-10 w-[79px] items-center justify-center gap-[10px] pl-px ${squareBtn}`}>
          <Camera />
          <Svg w={12} h={10}><path d="M0 1h12L6 9z" fill="#3c5060" /></Svg>
        </button>
        <DotsV className="ml-[9px] h-[50px]" />
        <button type="button" aria-label="Надписи узлов" className="ml-[24px] flex w-9 justify-center"><BigT /></button>
        <DotsV className="ml-5 h-[50px]" />
        <button type="button" aria-label="Рёбра" className={`ml-[10px] ${press}`}><EdgeIcon /></button>
        <button type="button" aria-label="Цвет рёбер" className={press}><EdgeIcon rainbow /></button>
        <button type="button" aria-label="Надписи рёбер" className="mr-[42px] ml-[14px]"><BigT outline /></button>
        <input type="range" aria-label="Толщина рёбер" defaultValue="12" className={range} />
        <DotsV className="ml-[37px] h-[50px]" />
        <button type="button" aria-label="Режим размера" className={`ml-3 ${sq}`}><ModeLetter /></button>
        <button type="button" aria-label="Режим цвета" className={sq}><ModeLetter blue /></button>
        <button type="button" className={`flex h-9 w-[204px] items-center justify-center text-[23px] ${squareBtn}`}>Arial-BoldMT, 32</button>
        <input type="range" aria-label="Размер шрифта" defaultValue="50" className={`ml-7 ${range}`} />
        <button type="button" aria-label="Цвет шрифта" className="ml-7 size-8 bg-black" />
        <button type="button" aria-label="Свойства надписи" className={sq}><Clipboard /></button>
        <button type="button" aria-label="Развернуть" className="mr-[18px] ml-auto"><Eject /></button>
      </div>
    </section>
  );
}

function Context() {
  return (
    <section className="flex h-[200px] shrink-0 flex-col bg-[#e2e2e2]">
      <PanelHeader>
        <Tab className="w-[155px] pl-[13px]">Контекст</Tab>
      </PanelHeader>
      <dl className="grid grid-cols-[107px_1fr] pt-2 pl-[14px] text-[26px] leading-[44px]">
        <dt className="font-bold">Узлы:</dt>
        <dd>427</dd>
        <dt className="font-bold">Рёбра:</dt>
        <dd>1040</dd>
        <dt className="col-span-2">Неориентированный граф</dt>
      </dl>
    </section>
  );
}

const TREE = ["Атрибуты", "Динамика", "Операторы", "Рёбра", "Топология", "Сохраненные запросы"];

function Filters() {
  const dis = "flex h-[38px] w-14 items-center justify-center border-2 border-[#bcbcbc] bg-[#e9e9e9]";
  return (
    <section className="flex min-h-0 flex-1 flex-col bg-[#e2e2e2]">
      <PanelHeader>
        <Tab className="w-[151px] pl-[12px]">Фильтры</Tab>
        <button type="button" className="h-[40px] w-[181px] border-r-2 border-b-2 border-[#333] bg-[linear-gradient(#d3d5be,#ababab_55%)] text-[22px]">
          Статистики
        </button>
      </PanelHeader>
      <div className="flex h-[42px] shrink-0 items-center border-b-2 border-[#707070]">
        <button type="button" className={`h-9 w-[130px] text-[23px] leading-8 ${squareBtn}`}>Сбросить</button>
        <DotsV className="ml-[9px] h-7" />
        <button type="button" disabled aria-label="Экспорт столбца" className={`ml-[11px] ${dis}`}><FilterGlyph kind="grid" /></button>
        <button type="button" disabled aria-label="Экспорт в рабочую область" className={dis}><FilterGlyph kind="list" /></button>
        <button type="button" disabled aria-label="Экспорт надписей" className={dis}><FilterGlyph kind="a" /></button>
      </div>
      <ul className="h-[520px] shrink-0 text-[25px] leading-9">
        <li className="flex items-center gap-[16px] pl-[2px]"><Folder />Библиотека</li>
        {TREE.map((name, i) => (
          <li key={name} className="flex items-center pl-2">
            <button type="button" aria-label={name} className={i === 5 ? "invisible" : ""}>
              <Svg w={18} h={20}><path d="M1 1l16 9-16 9z" fill="#808080" /></Svg>
            </button>
            <span className="mr-[22px] ml-[20px]"><Folder s={22} /></span>
            {name}
          </li>
        ))}
      </ul>
      <div className="h-[6px] shrink-0 bg-[#efefef]" />
      <ul className="flex-1 text-[25px] leading-9">
        <li className="flex items-center gap-[17px] pl-px"><Funnel />Наборы фильтров</li>
        <li className="flex items-center gap-[16px] pl-[43px] text-[25px] italic"><Target />Перетащите фильтр сюда</li>
      </ul>
      <button
        type="button"
        disabled
        className="mr-[13px] mb-[17px] flex h-[50px] w-[264px] items-center justify-center gap-[12px] self-end rounded-[10px] border-2 border-[#b4b4b4] bg-[#e9e9e9] pr-1 text-[22px] text-[#888] shadow-[0_1px_3px_#aaa]"
      >
        <Play gray />
        Отфильтровать
      </button>
    </section>
  );
}

export default function App() {
  return (
    <div className="h-screen overflow-hidden bg-white px-[114px] pt-[70px] pb-[158px] font-['Noto_Sans',sans-serif] text-black">
      <main className="flex h-full flex-col overflow-hidden rounded-[10px] bg-[#666] shadow-[0_44px_76px_-6px_rgba(0,0,0,0.55),0_0_2px_#999]">
        <TitleBar />
        <Banner />
        <WorkspaceBar />
        <div className="grid min-h-0 flex-1 grid-cols-[546px_minmax(0,1fr)_482px] gap-[6px] px-[6px] pt-[7px] pb-[6px]">
          <div className="flex min-h-0 flex-col gap-[6px]">
            <Appearance />
            <Layout />
          </div>
          <GraphPanel />
          <div className="flex min-h-0 flex-col gap-[6px]">
            <Context />
            <Filters />
          </div>
        </div>
        <footer className="flex h-[50px] shrink-0 items-center border-t-2 border-[#333] bg-[#b0b0b0] text-[26px]">
          <span className="flex h-full items-center border-r-2 border-[#6c6c6c] pr-[20px] pl-2">Force Atlas завершена на итерации номер 903</span>
          <button type="button" aria-label="Обновления" className="mr-8 ml-auto"><UpdateGlobe /></button>
        </footer>
      </main>
    </div>
  );
}
